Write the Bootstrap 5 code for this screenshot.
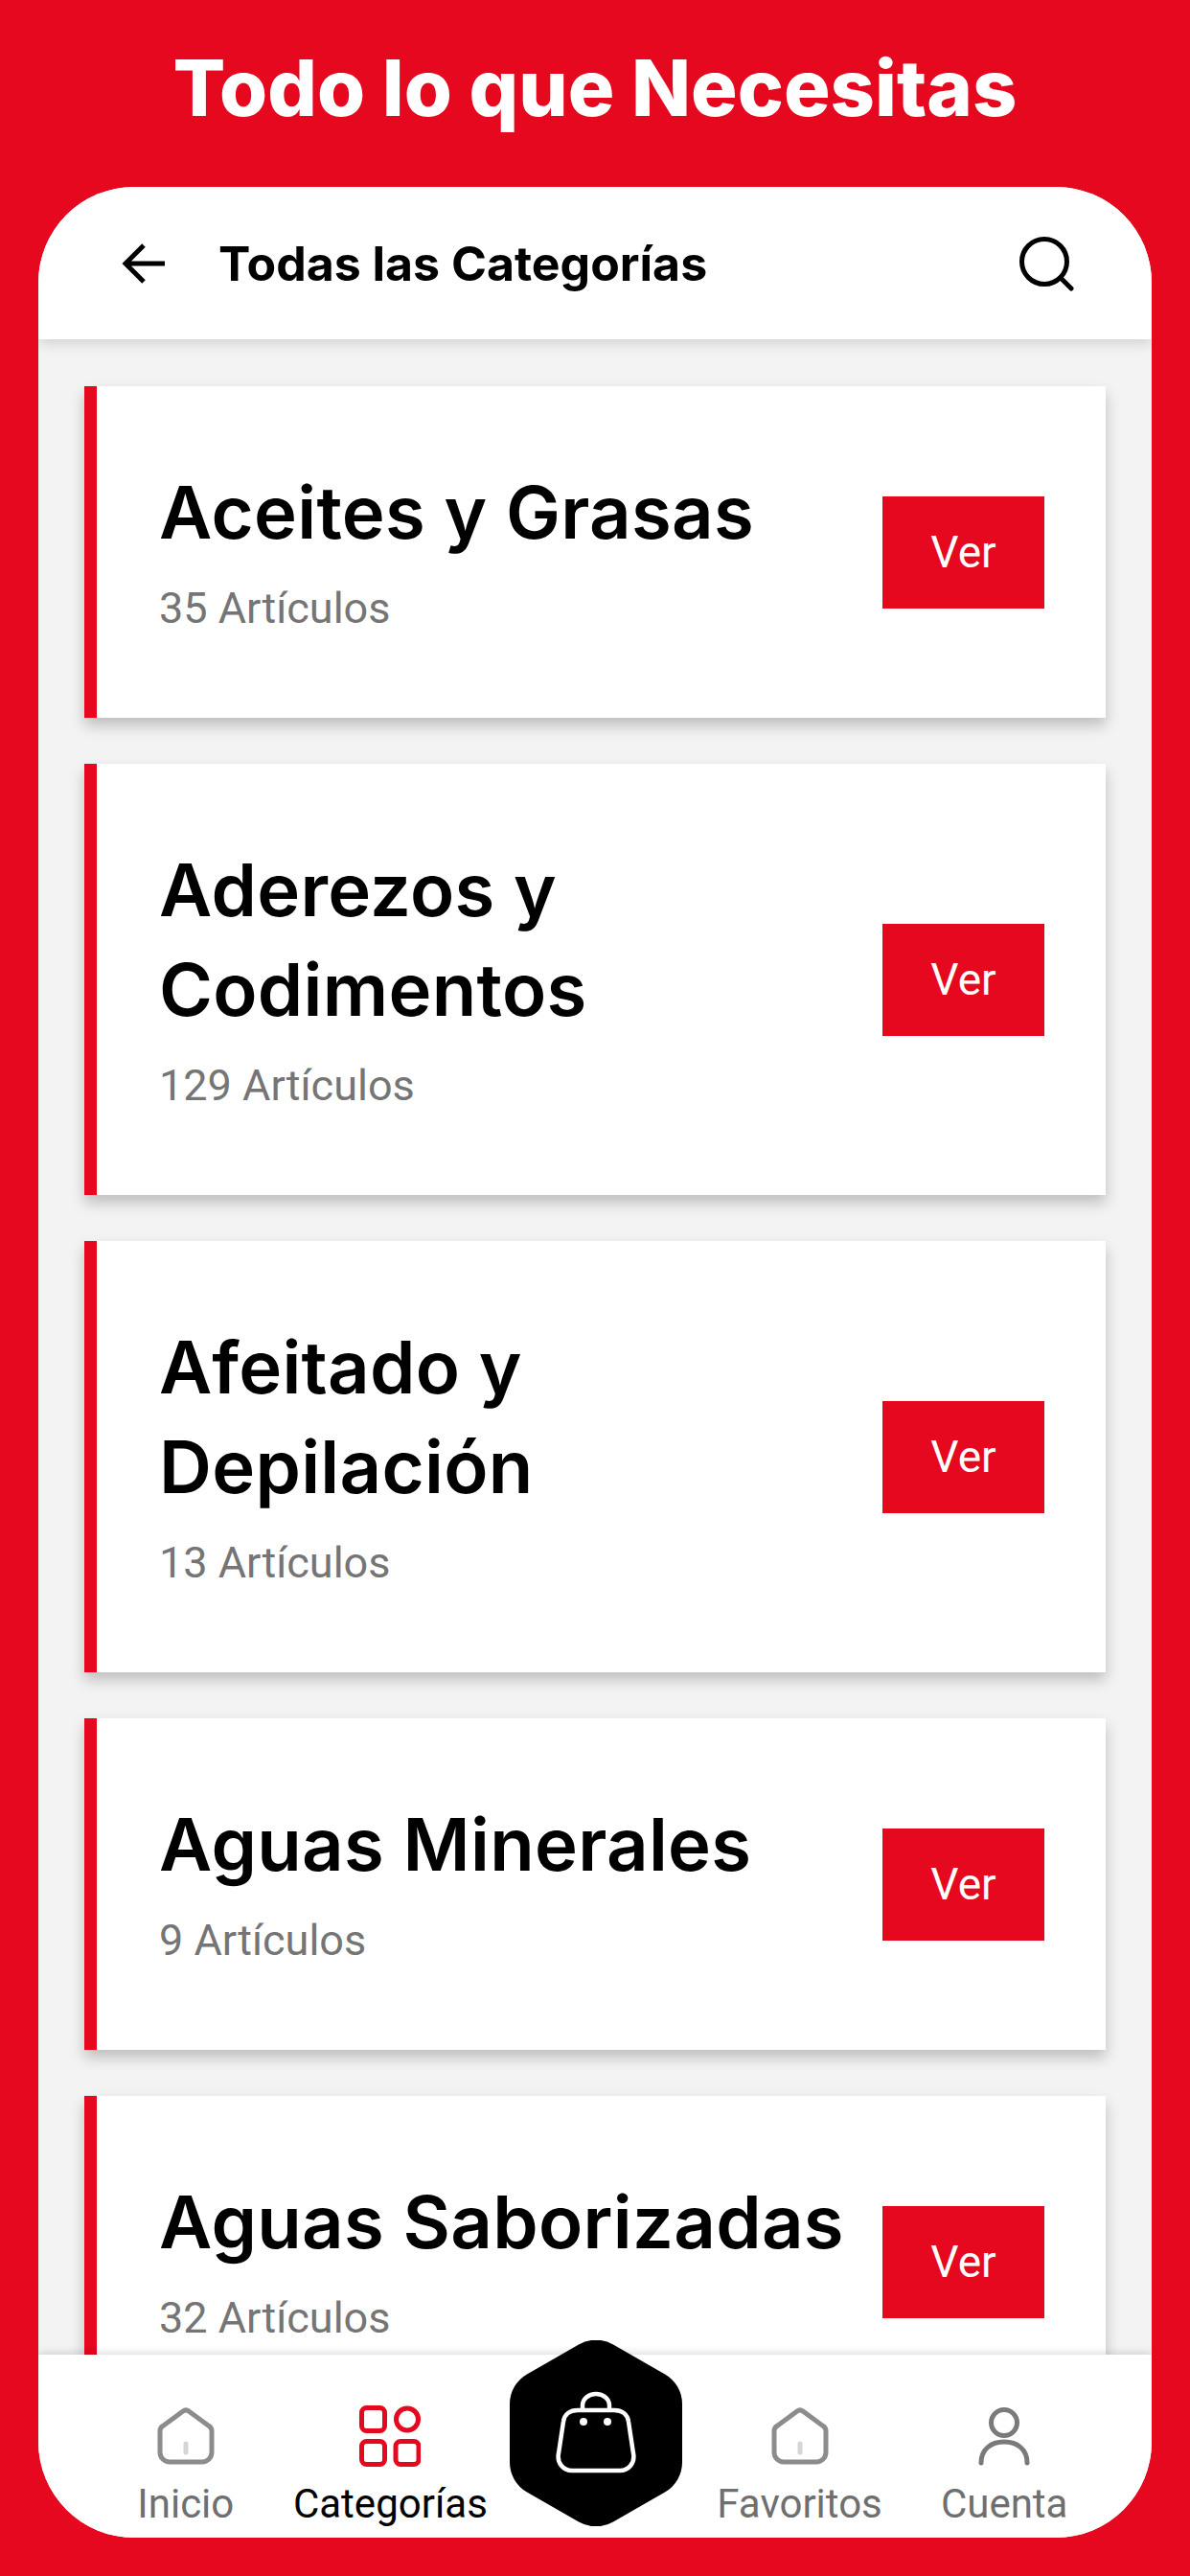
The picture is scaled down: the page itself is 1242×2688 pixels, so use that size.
<!DOCTYPE html>
<html lang="es">
<head>
    <meta charset="UTF-8">
    <title>Todas las Categorías</title>
    <link href="https://cdn.jsdelivr.net/npm/bootstrap@5.3.3/dist/css/bootstrap.min.css" rel="stylesheet">
    <style>
        html, body { height: 2688px; }
        body { background: #e5081f; overflow: hidden; }
        .promo-title { height: 195px; padding-top: 52px; margin: 0; font: 800 81px/80px Inter, "Liberation Sans", sans-serif; color: #fff; text-align: center; }
        .phone-frame { position: relative; margin: 0 40px; height: 2453px; border-radius: 100px; background: #fff; overflow: hidden; }
        .top-head { flex: none; height: 159px; padding: 0 81px 0 87px; background: #fff; box-shadow: 0 3px 14px rgba(0,0,0,.16); position: relative; z-index: 2; }
        .top-head h1 { margin: 0 0 0 55px; font: 700 50px/60px Inter, "Liberation Sans", sans-serif; color: #000; }
        .cat-list { flex: 1 1 auto; min-height: 0; overflow: hidden; background: #f3f3f3; padding: 49px 48px 0; gap: 48px; }
        .cat-card { flex: none; border: 0; border-left: 13px solid #e5081f; border-radius: 0; background: #fff; padding: 79px 64px 84px 65px; box-shadow: 0 8px 14px rgba(0,0,0,.22); }
        .cat-name { margin: 0; font: 600 76px/104px Inter, "Liberation Sans", sans-serif; letter-spacing: .3px; color: #000; }
        .cat-count { margin: 18px 0 0; font: 400 45px/61px Roboto, sans-serif; color: #757575; }
        .ver-btn { flex: none; width: 169px; height: 117px; border: 0; border-radius: 0; background: #e5081f; color: #fff; font: 400 46px/117px Roboto, sans-serif; padding: 0; margin: 5px 0 0 40px; }
        .bottom-nav { flex: none; height: 191px; padding: 0 47px; background: #fff; box-shadow: 0 -2px 8px rgba(0,0,0,.14); position: relative; z-index: 2; }
        .nav-slot { width: 214px; padding-top: 53px; font: 400 42px/50px Roboto, sans-serif; color: #6f6f6f; text-align: center; white-space: nowrap; }
        .nav-slot.on { color: #000; }
        .nav-slot svg { display: block; width: 64px; height: 64px; margin: 0 auto 14px; }
        .hex-btn { position: absolute; left: 492px; top: -15px; width: 180px; height: 194px; }
    </style>
</head>
<body>
    <h2 class="promo-title">Todo lo que Necesitas</h2>

    <div class="phone-frame d-flex flex-column">
        <div class="top-head d-flex align-items-center">
            <svg width="46" height="44" viewBox="0 0 46 44" fill="none" stroke="#000" stroke-width="5"><path d="M45 22H4M23 3 4 22l19 19"/></svg>
            <h1 class="flex-grow-1">Todas las Categorías</h1>
            <svg width="58" height="58" viewBox="0 0 58 58" fill="none" stroke="#000" stroke-width="5" stroke-linecap="round"><circle cx="27" cy="27" r="23.5"/><path d="m44 44 11 11"/></svg>
        </div>

        <div class="cat-list d-flex flex-column" id="cats"></div>

        <div class="bottom-nav d-flex">
            <div class="nav-slot">
                <svg viewBox="-2 -2 64 64" fill="none" stroke="#8c8c8c" stroke-width="5"><path d="M6 19.500 27 4a5 5 0 0 1 6 0l21 15.500a6 6 0 0 1 3 5V47a10 10 0 0 1-10 10H13A10 10 0 0 1 3 47V24.500a6 6 0 0 1 3-5Z"/><path d="M30 38v9" stroke="#d5d5d5" stroke-linecap="round"/></svg>
                Inicio
            </div>
            <div class="nav-slot on">
                <svg viewBox="0 0 64 64" fill="none" stroke="#e5081f" stroke-width="5"><rect x="2.500" y="2.500" width="24" height="24" rx="5"/><circle cx="50" cy="14.500" r="11.500"/><rect x="2.500" y="37.500" width="24" height="24" rx="5"/><rect x="38" y="37.500" width="24" height="24" rx="5"/></svg>
                Categorías
            </div>
            <div class="nav-slot"></div>
            <div class="nav-slot">
                <svg viewBox="-2 -2 64 64" fill="none" stroke="#8c8c8c" stroke-width="5"><path d="M6 19.500 27 4a5 5 0 0 1 6 0l21 15.500a6 6 0 0 1 3 5V47a10 10 0 0 1-10 10H13A10 10 0 0 1 3 47V24.500a6 6 0 0 1 3-5Z"/><path d="M30 38v9" stroke="#d5d5d5" stroke-linecap="round"/></svg>
                Favoritos
            </div>
            <div class="nav-slot">
                <svg viewBox="-2 -2 64 64" fill="none" stroke="#7a7a7a" stroke-width="5" stroke-linecap="round"><circle cx="30" cy="16" r="13.500"/><path d="M6 58c0-14 10-22 24-22s24 8 24 22"/></svg>
                Cuenta
            </div>
            <svg class="hex-btn" viewBox="0 0 180 194">
                <path d="M72 4.500a36 36 0 0 1 36 0l54 31a36 36 0 0 1 18 31v61a36 36 0 0 1-18 31l-54 31a36 36 0 0 1-36 0l-54-31a36 36 0 0 1-18-31v-61a36 36 0 0 1 18-31Z" fill="#000"/>
                <g fill="none" stroke="#fff" stroke-width="4.500">
                    <path d="M71 73h38c8 0 14 4 15 12l5 33c2 10-5 18-14 18H65c-9 0-16-8-14-18l5-33c1-8 7-12 15-12Z"/>
                    <path d="M76 73v-5a14 12 0 0 1 28 0v5"/>
                </g>
                <circle cx="77" cy="85" r="4" fill="#fff"/>
                <circle cx="102" cy="85" r="4" fill="#fff"/>
            </svg>
        </div>
    </div>

<script>
const cats = [
    { name: 'Aceites y Grasas', count: 35 },
    { name: 'Aderezos y<br>Codimentos', count: 129 },
    { name: 'Afeitado y<br>Depilación', count: 13 },
    { name: 'Aguas Minerales', count: 9 },
    { name: 'Aguas Saborizadas', count: 32 }
];

const list = document.querySelector('#cats');
cats.forEach(c => {
    const row = document.createElement('div');
    row.className = 'card cat-card flex-row align-items-center justify-content-between';
    row.innerHTML = `
        <div>
            <h3 class="cat-name">${c.name}</h3>
            <p class="cat-count">${c.count} Artículos</p>
        </div>
        <button type="button" class="btn ver-btn">Ver</button>`;
    list.appendChild(row);
});
</script>
<script src="https://cdn.jsdelivr.net/npm/bootstrap@5.3.3/dist/js/bootstrap.bundle.min.js"></script>
</body>
</html>
